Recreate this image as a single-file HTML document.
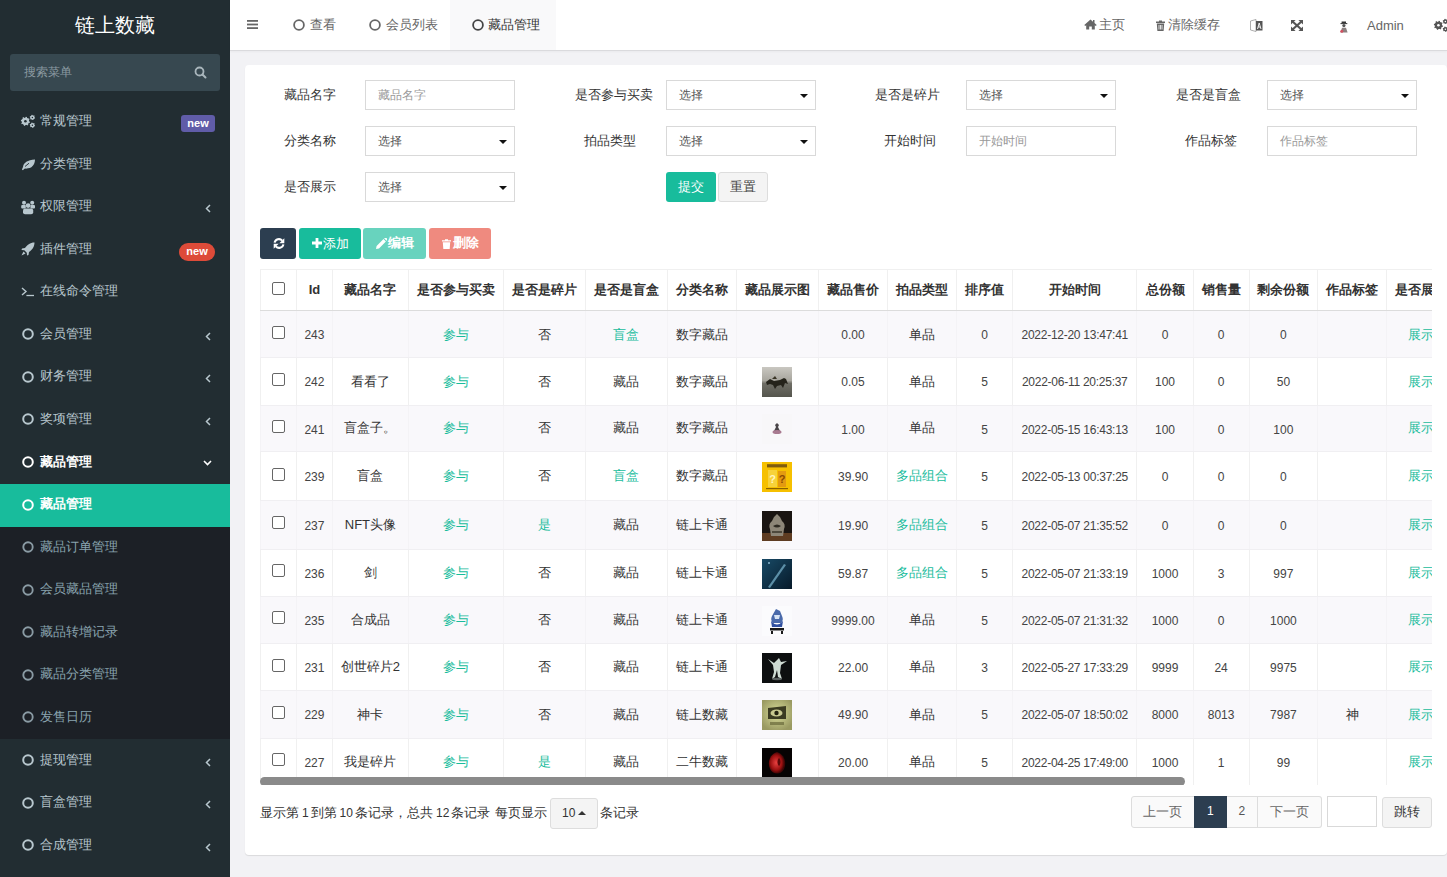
<!DOCTYPE html>
<html><head><meta charset="utf-8">
<style>
*{margin:0;padding:0;box-sizing:border-box}
html,body{width:1447px;height:877px;overflow:hidden;background:#f2f2f5;font-family:"Liberation Sans",sans-serif;font-size:13px;color:#333}
.abs{position:absolute}
#side{position:absolute;left:0;top:0;width:230px;height:877px;background:#222d32}
#logo{position:absolute;left:0;top:0;width:230px;height:50px;color:#fff;font-size:20px;text-align:center;line-height:50px}
#sform{position:absolute;left:10px;top:54px;width:210px;height:37px;background:#374850;border-radius:3px}
#sform span{position:absolute;left:14px;top:0;line-height:37px;font-size:12px;color:#8b9aa1}
.mi{position:absolute;left:0;width:230px;height:42.57px;color:#b8c7ce;font-size:13px}
.mi .t{position:absolute;left:40px;top:0;line-height:42.57px;white-space:nowrap}
.mi svg{position:absolute}
#subbg{position:absolute;left:0;top:483.6px;width:230px;height:255px;background:#1c2026}
#active{position:absolute;left:0;top:484px;width:230px;height:42.5px;background:#18bc9c}
.badge{position:absolute;color:#fff;font-weight:bold;font-size:11px;text-align:center}
#hdr{position:absolute;left:230px;top:0;width:1217px;height:51px;background:#fff;border-bottom:1px solid #dadadd;box-shadow:0 1px 2px rgba(0,0,0,.04)}
.nt{position:absolute;top:0;line-height:48px;font-size:13px;color:#666;white-space:nowrap}
#card{position:absolute;left:245px;top:65px;width:1202px;height:790px;background:#fff;border-radius:4px;box-shadow:0 1px 1px rgba(0,0,0,.1)}
.lbl{position:absolute;width:120px;text-align:center;font-size:13px;color:#333;line-height:30px;white-space:nowrap}
.inp{position:absolute;width:150px;height:30px;border:1px solid #d9d9d9;background:#fff;font-size:12px;color:#999;line-height:28px;padding-left:12px}
.sel{color:#555}
.caret{position:absolute;right:7px;top:13px;width:0;height:0;border-left:4px solid transparent;border-right:4px solid transparent;border-top:4px solid #111}
.btn{position:absolute;height:30.5px;border-radius:3px;color:#fff;font-size:13px;line-height:30px;text-align:center;white-space:nowrap}
#tbl{position:absolute;left:260px;top:269px;width:1172px;height:516px;overflow:hidden}
.hc{position:absolute;top:1px;height:41.5px;line-height:39px;text-align:center;font-weight:bold;color:#333;white-space:nowrap}
.tr{position:absolute;left:0;width:1200px}
.tr.odd{background:#f9f9fa}
.td{position:absolute;top:1px;text-align:center;color:#333;white-space:nowrap;font-size:13px}
.cj{position:relative;top:-1.5px}
.num{font-size:12px;color:#444}
.dt{letter-spacing:-0.26px}
.g{color:#18bc9c}
.cb{position:absolute;width:13px;height:13px;border:1px solid #666;border-radius:2px;background:#fff}
</style></head><body>
<div id="side">
<div id="logo">链上数藏</div>
<div id="sform"><span>搜索菜单</span><svg class="abs" style="left:184px;top:12px" width="13" height="13" viewBox="0 0 13 13"><circle cx="5.5" cy="5.5" r="4" fill="none" stroke="#a9b6bc" stroke-width="1.8"/><line x1="8.5" y1="8.5" x2="11.5" y2="11.5" stroke="#a9b6bc" stroke-width="2" stroke-linecap="round"/></svg></div>
<div id="subbg"></div><div id="active"></div>
<div class="mi" style="top:100.00px;"><svg style="left:20px;top:14px" width="16" height="15" viewBox="0 0 16 15"><path d="M9.00 7.30 L9.98 7.73 L9.72 8.89 L8.65 8.86 L7.95 9.85 L8.33 10.84 L7.33 11.48 L6.59 10.70 L5.40 10.90 L4.97 11.88 L3.81 11.62 L3.84 10.55 L2.85 9.85 L1.86 10.23 L1.22 9.23 L2.00 8.49 L1.80 7.30 L0.82 6.87 L1.08 5.71 L2.15 5.74 L2.85 4.75 L2.47 3.76 L3.47 3.12 L4.21 3.90 L5.40 3.70 L5.83 2.72 L6.99 2.98 L6.96 4.05 L7.95 4.75 L8.94 4.37 L9.58 5.37 L8.80 6.11Z" fill="#b8c7ce"/><circle cx="5.4" cy="7.3" r="3.6" fill="#b8c7ce"/><circle cx="5.4" cy="7.3" r="1.3" fill="#222d32"/><path d="M14.40 3.40 L15.08 3.74 L14.81 4.63 L14.05 4.52 L13.40 5.13 L13.45 5.89 L12.54 6.10 L12.25 5.39 L11.40 5.13 L10.77 5.55 L10.14 4.87 L10.60 4.27 L10.40 3.40 L9.72 3.06 L9.99 2.17 L10.75 2.28 L11.40 1.67 L11.35 0.91 L12.26 0.70 L12.55 1.41 L13.40 1.67 L14.03 1.25 L14.66 1.93 L14.20 2.53Z" fill="#b8c7ce"/><circle cx="12.4" cy="3.4" r="2.0" fill="#b8c7ce"/><circle cx="12.4" cy="3.4" r="0.75" fill="#222d32"/><path d="M14.40 11.20 L15.08 11.54 L14.81 12.43 L14.05 12.32 L13.40 12.93 L13.45 13.69 L12.54 13.90 L12.25 13.19 L11.40 12.93 L10.77 13.35 L10.14 12.67 L10.60 12.07 L10.40 11.20 L9.72 10.86 L9.99 9.97 L10.75 10.08 L11.40 9.47 L11.35 8.71 L12.26 8.50 L12.55 9.21 L13.40 9.47 L14.03 9.05 L14.66 9.73 L14.20 10.33Z" fill="#b8c7ce"/><circle cx="12.4" cy="11.2" r="2.0" fill="#b8c7ce"/><circle cx="12.4" cy="11.2" r="0.75" fill="#222d32"/></svg><span class="t">常规管理</span><div class="badge" style="left:181px;top:15px;width:34px;height:16.5px;line-height:16.5px;background:#605ca8;border-radius:3px">new</div></div>
<div class="mi" style="top:142.57px;"><svg style="left:20px;top:156px;top:14px" width="16" height="14" viewBox="0 0 16 14"><path d="M2 12.8 C2.2 11.5 2.6 10.6 3 10 C3.5 6 7.5 3 15 2.6 C14.8 8.5 11.5 12 5 11.6 C4.2 12 3.4 12.6 3 13.2Z" fill="#b8c7ce"/><path d="M5 9.5 L9 6.2" stroke="#222d32" stroke-width="0.9"/></svg><span class="t">分类管理</span></div>
<div class="mi" style="top:185.14px;"><svg style="left:20px;top:13.5px" width="16" height="16" viewBox="0 0 16 16"><g fill="#b8c7ce"><circle cx="4" cy="3.8" r="2"/><circle cx="12.2" cy="3.8" r="2"/><rect x="1.2" y="6" width="4.6" height="3.6" rx="1"/><rect x="10.4" y="6" width="4.6" height="3.6" rx="1"/><circle cx="8.1" cy="6.6" r="2.4"/><rect x="3" y="9.6" width="10.2" height="5.6" rx="2"/></g></svg><span class="t">权限管理</span><svg style="left:205px;top:19px" width="6" height="9" viewBox="0 0 6 9"><path d="M5 1 L1.5 4.5 L5 8" fill="none" stroke="#b8c7ce" stroke-width="1.5"/></svg></div>
<div class="mi" style="top:227.71px;"><svg style="left:21px;top:14px" width="14" height="14" viewBox="0 0 14 14"><path d="M13.5 0.5 C9 0.5 6 3 4 6 L1 6.5 L0.5 8 L3.3 8.2 L5.8 10.7 L6 13.5 L7.5 13 L8 10 C11 8 13.5 5 13.5 0.5Z" fill="#b8c7ce"/><path d="M2.5 9.5 L0.5 13.5 L4.5 11.5Z" fill="#b8c7ce"/></svg><span class="t">插件管理</span><div class="badge" style="left:179px;top:15.5px;width:36px;height:17.4px;line-height:17.4px;background:#dd4b39;border-radius:9px">new</div></div>
<div class="mi" style="top:270.28px;"><svg style="left:21px;top:16px" width="16" height="11" viewBox="0 0 16 11"><path d="M1 2 L5 5.5 L1 9" fill="none" stroke="#b8c7ce" stroke-width="1.4"/><line x1="5.4" y1="9.5" x2="13" y2="9.5" stroke="#b8c7ce" stroke-width="1.3"/></svg><span class="t">在线命令管理</span></div>
<div class="mi" style="top:312.85px;"><svg style="left:22px;top:15.5px" width="12" height="12" viewBox="0 0 12 12"><circle cx="6" cy="6" r="4.8" fill="none" stroke="#b8c7ce" stroke-width="2"/></svg><span class="t">会员管理</span><svg style="left:205px;top:19px" width="6" height="9" viewBox="0 0 6 9"><path d="M5 1 L1.5 4.5 L5 8" fill="none" stroke="#b8c7ce" stroke-width="1.5"/></svg></div>
<div class="mi" style="top:355.42px;"><svg style="left:22px;top:15.5px" width="12" height="12" viewBox="0 0 12 12"><circle cx="6" cy="6" r="4.8" fill="none" stroke="#b8c7ce" stroke-width="2"/></svg><span class="t">财务管理</span><svg style="left:205px;top:19px" width="6" height="9" viewBox="0 0 6 9"><path d="M5 1 L1.5 4.5 L5 8" fill="none" stroke="#b8c7ce" stroke-width="1.5"/></svg></div>
<div class="mi" style="top:397.99px;"><svg style="left:22px;top:15.5px" width="12" height="12" viewBox="0 0 12 12"><circle cx="6" cy="6" r="4.8" fill="none" stroke="#b8c7ce" stroke-width="2"/></svg><span class="t">奖项管理</span><svg style="left:205px;top:19px" width="6" height="9" viewBox="0 0 6 9"><path d="M5 1 L1.5 4.5 L5 8" fill="none" stroke="#b8c7ce" stroke-width="1.5"/></svg></div>
<div class="mi" style="top:440.56px;color:#fff;font-weight:bold"><svg style="left:22px;top:15.5px" width="12" height="12" viewBox="0 0 12 12"><circle cx="6" cy="6" r="4.8" fill="none" stroke="#fff" stroke-width="2"/></svg><span class="t">藏品管理</span><svg style="left:203px;top:19px" width="9" height="6" viewBox="0 0 9 6"><path d="M1 1 L4.5 4.5 L8 1" fill="none" stroke="#fff" stroke-width="1.6"/></svg></div>
<div class="mi" style="top:483.13px;color:#fff;font-weight:bold"><svg style="left:22px;top:15.5px" width="12" height="12" viewBox="0 0 12 12"><circle cx="6" cy="6" r="4.8" fill="none" stroke="#fff" stroke-width="2"/></svg><span class="t">藏品管理</span></div>
<div class="mi" style="top:525.70px;color:#8aa4af"><svg style="left:22px;top:15.5px" width="12" height="12" viewBox="0 0 12 12"><circle cx="6" cy="6" r="4.7" fill="none" stroke="#8a9ba4" stroke-width="1.9"/></svg><span class="t">藏品订单管理</span></div>
<div class="mi" style="top:568.27px;color:#8aa4af"><svg style="left:22px;top:15.5px" width="12" height="12" viewBox="0 0 12 12"><circle cx="6" cy="6" r="4.7" fill="none" stroke="#8a9ba4" stroke-width="1.9"/></svg><span class="t">会员藏品管理</span></div>
<div class="mi" style="top:610.84px;color:#8aa4af"><svg style="left:22px;top:15.5px" width="12" height="12" viewBox="0 0 12 12"><circle cx="6" cy="6" r="4.7" fill="none" stroke="#8a9ba4" stroke-width="1.9"/></svg><span class="t">藏品转增记录</span></div>
<div class="mi" style="top:653.41px;color:#8aa4af"><svg style="left:22px;top:15.5px" width="12" height="12" viewBox="0 0 12 12"><circle cx="6" cy="6" r="4.7" fill="none" stroke="#8a9ba4" stroke-width="1.9"/></svg><span class="t">藏品分类管理</span></div>
<div class="mi" style="top:695.98px;color:#8aa4af"><svg style="left:22px;top:15.5px" width="12" height="12" viewBox="0 0 12 12"><circle cx="6" cy="6" r="4.7" fill="none" stroke="#8a9ba4" stroke-width="1.9"/></svg><span class="t">发售日历</span></div>
<div class="mi" style="top:738.55px;"><svg style="left:22px;top:15.5px" width="12" height="12" viewBox="0 0 12 12"><circle cx="6" cy="6" r="4.8" fill="none" stroke="#b8c7ce" stroke-width="2"/></svg><span class="t">提现管理</span><svg style="left:205px;top:19px" width="6" height="9" viewBox="0 0 6 9"><path d="M5 1 L1.5 4.5 L5 8" fill="none" stroke="#b8c7ce" stroke-width="1.5"/></svg></div>
<div class="mi" style="top:781.12px;"><svg style="left:22px;top:15.5px" width="12" height="12" viewBox="0 0 12 12"><circle cx="6" cy="6" r="4.8" fill="none" stroke="#b8c7ce" stroke-width="2"/></svg><span class="t">盲盒管理</span><svg style="left:205px;top:19px" width="6" height="9" viewBox="0 0 6 9"><path d="M5 1 L1.5 4.5 L5 8" fill="none" stroke="#b8c7ce" stroke-width="1.5"/></svg></div>
<div class="mi" style="top:823.69px;"><svg style="left:22px;top:15.5px" width="12" height="12" viewBox="0 0 12 12"><circle cx="6" cy="6" r="4.8" fill="none" stroke="#b8c7ce" stroke-width="2"/></svg><span class="t">合成管理</span><svg style="left:205px;top:19px" width="6" height="9" viewBox="0 0 6 9"><path d="M5 1 L1.5 4.5 L5 8" fill="none" stroke="#b8c7ce" stroke-width="1.5"/></svg></div>
</div>
<div id="hdr">
<svg class="abs" style="left:17px;top:20px" width="11" height="9" viewBox="0 0 11 9"><g fill="#666"><rect x="0" y="0" width="11" height="1.8"/><rect x="0" y="3.6" width="11" height="1.8"/><rect x="0" y="7.2" width="11" height="1.8"/></g></svg>
<svg class="abs" style="left:62.5px;top:18.5px" width="12" height="12" viewBox="0 0 12 12"><circle cx="6" cy="6" r="4.9" fill="none" stroke="#666" stroke-width="1.8"/></svg>
<span class="nt" style="left:80px;top:0.5px">查看</span>
<svg class="abs" style="left:138.5px;top:18.5px" width="12" height="12" viewBox="0 0 12 12"><circle cx="6" cy="6" r="4.9" fill="none" stroke="#666" stroke-width="1.8"/></svg>
<span class="nt" style="left:156px;top:0.5px">会员列表</span>
<div class="abs" style="left:220px;top:0;width:106px;height:50px;background:#f9f9fa"></div>
<svg class="abs" style="left:241.5px;top:18.5px" width="12" height="12" viewBox="0 0 12 12"><circle cx="6" cy="6" r="4.9" fill="none" stroke="#444" stroke-width="1.8"/></svg>
<span class="nt" style="left:257.5px;top:0.5px;color:#333">藏品管理</span>
<svg class="abs" style="left:854px;top:19px" width="13" height="11" viewBox="0 0 13 11"><path d="M6.5 0.5 L0.3 6 L1.2 7 L2.2 6.2 V10.5 H5.2 V7.5 H7.8 V10.5 H10.8 V6.2 L11.8 7 L12.7 6 L10.5 4 V1 H9 V2.7Z" fill="#666"/></svg>
<span class="nt" style="left:869px;top:1px">主页</span>
<svg class="abs" style="left:926px;top:19.5px" width="9" height="11" viewBox="0 0 9 11"><path d="M0 1.5 H3 V0.5 H6 V1.5 H9 V3 H0Z M0.8 3.6 H8.2 L7.6 11 H1.4Z" fill="#666"/><g stroke="#fff" stroke-width="0.8"><line x1="3" y1="5" x2="3" y2="9.5"/><line x1="4.5" y1="5" x2="4.5" y2="9.5"/><line x1="6" y1="5" x2="6" y2="9.5"/></g></svg>
<span class="nt" style="left:938px;top:1px">清除缓存</span>
<svg class="abs" style="left:1020px;top:18.5px" width="13" height="13" viewBox="0 0 13 13"><path d="M0.5 2 L6 0.5 V12.5 L0.5 11Z" fill="#fff" stroke="#999" stroke-width="0.8"/><path d="M6 2 H12.5 V11.5 H6Z" fill="#555"/><path d="M7.5 10 L9.2 4 L11 10 M8.1 8 H10.3" fill="none" stroke="#fff" stroke-width="0.9"/></svg>
<svg class="abs" style="left:1061px;top:20px" width="12" height="11" viewBox="0 0 12 11"><g fill="#555"><path d="M0 0 H4.6 L0 4.6Z"/><path d="M12 0 V4.6 L7.4 0Z"/><path d="M0 11 V6.4 L4.6 11Z"/><path d="M12 11 H7.4 L12 6.4Z"/></g><g stroke="#555" stroke-width="2.1"><line x1="1.5" y1="1.5" x2="10.5" y2="9.5"/><line x1="10.5" y1="1.5" x2="1.5" y2="9.5"/></g></svg>
<svg class="abs" style="left:1109px;top:20.5px" width="10" height="12" viewBox="0 0 10 12"><rect x="2.6" y="0.5" width="4.4" height="1.6" fill="#333"/><rect x="1.5" y="2.1" width="6.8" height="1" fill="#333"/><circle cx="4.9" cy="4.6" r="1.6" fill="#555"/><path d="M1.5 11.5 L3 6.8 H7 L8.6 11.5Z" fill="#8a8080"/><circle cx="2.8" cy="10.2" r="1.5" fill="#d05060"/></svg>
<span class="nt" style="left:1137px;top:2px">Admin</span>
<svg class="abs" style="left:1203px;top:18px" width="16" height="15" viewBox="0 0 16 15"><path d="M9.00 7.30 L9.98 7.73 L9.72 8.89 L8.65 8.86 L7.95 9.85 L8.33 10.84 L7.33 11.48 L6.59 10.70 L5.40 10.90 L4.97 11.88 L3.81 11.62 L3.84 10.55 L2.85 9.85 L1.86 10.23 L1.22 9.23 L2.00 8.49 L1.80 7.30 L0.82 6.87 L1.08 5.71 L2.15 5.74 L2.85 4.75 L2.47 3.76 L3.47 3.12 L4.21 3.90 L5.40 3.70 L5.83 2.72 L6.99 2.98 L6.96 4.05 L7.95 4.75 L8.94 4.37 L9.58 5.37 L8.80 6.11Z" fill="#555"/><circle cx="5.4" cy="7.3" r="3.6" fill="#555"/><circle cx="5.4" cy="7.3" r="1.3" fill="#fff"/><path d="M14.40 3.40 L15.08 3.74 L14.81 4.63 L14.05 4.52 L13.40 5.13 L13.45 5.89 L12.54 6.10 L12.25 5.39 L11.40 5.13 L10.77 5.55 L10.14 4.87 L10.60 4.27 L10.40 3.40 L9.72 3.06 L9.99 2.17 L10.75 2.28 L11.40 1.67 L11.35 0.91 L12.26 0.70 L12.55 1.41 L13.40 1.67 L14.03 1.25 L14.66 1.93 L14.20 2.53Z" fill="#555"/><circle cx="12.4" cy="3.4" r="2.0" fill="#555"/><circle cx="12.4" cy="3.4" r="0.75" fill="#fff"/><path d="M14.40 11.20 L15.08 11.54 L14.81 12.43 L14.05 12.32 L13.40 12.93 L13.45 13.69 L12.54 13.90 L12.25 13.19 L11.40 12.93 L10.77 13.35 L10.14 12.67 L10.60 12.07 L10.40 11.20 L9.72 10.86 L9.99 9.97 L10.75 10.08 L11.40 9.47 L11.35 8.71 L12.26 8.50 L12.55 9.21 L13.40 9.47 L14.03 9.05 L14.66 9.73 L14.20 10.33Z" fill="#555"/><circle cx="12.4" cy="11.2" r="2.0" fill="#555"/><circle cx="12.4" cy="11.2" r="0.75" fill="#fff"/></svg>
</div>
<div id="card"></div>
<div class="lbl" style="left:249.5px;top:80px">藏品名字</div>
<div class="inp" style="left:365.0px;top:80px">藏品名字</div>
<div class="lbl" style="left:553.5px;top:80px">是否参与买卖</div>
<div class="inp sel" style="left:666.0px;top:80px">选择<i class="caret"></i></div>
<div class="lbl" style="left:847.9px;top:80px">是否是碎片</div>
<div class="inp sel" style="left:966.0px;top:80px">选择<i class="caret"></i></div>
<div class="lbl" style="left:1148.5px;top:80px">是否是盲盒</div>
<div class="inp sel" style="left:1267.0px;top:80px">选择<i class="caret"></i></div>
<div class="lbl" style="left:249.5px;top:126px">分类名称</div>
<div class="inp sel" style="left:365.0px;top:126px">选择<i class="caret"></i></div>
<div class="lbl" style="left:550.3px;top:126px">拍品类型</div>
<div class="inp sel" style="left:666.0px;top:126px">选择<i class="caret"></i></div>
<div class="lbl" style="left:850.0px;top:126px">开始时间</div>
<div class="inp" style="left:966.0px;top:126px">开始时间</div>
<div class="lbl" style="left:1150.6px;top:126px">作品标签</div>
<div class="inp" style="left:1267.0px;top:126px">作品标签</div>
<div class="lbl" style="left:249.5px;top:172px">是否展示</div>
<div class="inp sel" style="left:365.0px;top:172px">选择<i class="caret"></i></div>
<div class="btn" style="left:666px;top:172px;width:50px;height:30px;background:#18bc9c">提交</div>
<div class="btn" style="left:718px;top:172px;width:50px;height:30px;background:#f4f4f4;border:1px solid #ddd;color:#444;line-height:28px">重置</div>
<div class="btn" style="left:260px;top:228px;width:36px;background:#2c3e50"><svg class="abs" style="left:12.5px;top:10px" width="12" height="11" viewBox="0 0 12 11"><path d="M1.6 4.6 A4.4 4.4 0 0 1 9.2 2.6" fill="none" stroke="#fff" stroke-width="2.1"/><path d="M11.3 0.2 V5.2 H6.3Z" fill="#fff"/><path d="M10.4 6.4 A4.4 4.4 0 0 1 2.8 8.4" fill="none" stroke="#fff" stroke-width="2.1"/><path d="M0.7 10.8 V5.8 H5.7Z" fill="#fff"/></svg></div>
<div class="btn" style="left:299px;top:228px;width:61.5px;background:#18bc9c"><svg class="abs" style="left:13px;top:10px" width="10" height="10" viewBox="0 0 10 10"><path d="M3.6 0 H6.4 V3.6 H10 V6.4 H6.4 V10 H3.6 V6.4 H0 V3.6 H3.6Z" fill="#fff"/></svg><span class="abs" style="left:24px;top:0.5px">添加</span></div>
<div class="btn" style="left:363px;top:228px;width:63px;background:#18bc9c;opacity:.65"><svg class="abs" style="left:13px;top:10px" width="11" height="11" viewBox="0 0 11 11"><path d="M0 11 L0.6 8 L7.5 1.1 L9.9 3.5 L3 10.4Z M8.2 0.4 L9 -0.4 Q9.6 -0.8 10.2 -0.2 L11.2 0.8 Q11.8 1.4 11.2 2 L10.6 2.8Z" fill="#fff"/></svg><span class="abs" style="left:25px;top:0;font-weight:bold">编辑</span></div>
<div class="btn" style="left:429px;top:228px;width:62px;background:#e74c3c;opacity:.65"><svg class="abs" style="left:12.5px;top:10.5px" width="9" height="10" viewBox="0 0 9 10"><path d="M0 1.2 H3 V0.2 H6 V1.2 H9 V2.6 H0Z M0.8 3.2 H8.2 L7.7 10 H1.3Z" fill="#fff"/></svg><span class="abs" style="left:23.5px;top:0;font-weight:bold">删除</span></div>
<div id="tbl">
<div class="hc" style="left:0.0px;width:36.5px"><i class="cb" style="left:12px;top:12px"></i></div>
<div class="hc" style="left:36.5px;width:35.9px">Id</div>
<div class="hc" style="left:72.4px;width:76.0px">藏品名字</div>
<div class="hc" style="left:148.4px;width:95.1px">是否参与买卖</div>
<div class="hc" style="left:243.5px;width:81.9px">是否是碎片</div>
<div class="hc" style="left:325.4px;width:81.9px">是否是盲盒</div>
<div class="hc" style="left:407.3px;width:69.2px">分类名称</div>
<div class="hc" style="left:476.5px;width:82.0px">藏品展示图</div>
<div class="hc" style="left:558.5px;width:69.1px">藏品售价</div>
<div class="hc" style="left:627.6px;width:69.1px">拍品类型</div>
<div class="hc" style="left:696.7px;width:55.8px">排序值</div>
<div class="hc" style="left:752.5px;width:124.5px">开始时间</div>
<div class="hc" style="left:877.0px;width:56.0px">总份额</div>
<div class="hc" style="left:933.0px;width:56.2px">销售量</div>
<div class="hc" style="left:989.2px;width:68.4px">剩余份额</div>
<div class="hc" style="left:1057.6px;width:68.9px">作品标签</div>
<div class="hc" style="left:1126.5px;width:68.5px">是否展示</div>
<div class="abs" style="left:0;top:0;width:1200px;height:1px;background:#f0f0f0"></div>
<div class="abs" style="left:0px;top:0;width:1px;height:41px;background:#f0f0f0"></div>
<div class="abs" style="left:36px;top:0;width:1px;height:41px;background:#f0f0f0"></div>
<div class="abs" style="left:72px;top:0;width:1px;height:41px;background:#f0f0f0"></div>
<div class="abs" style="left:148px;top:0;width:1px;height:41px;background:#f0f0f0"></div>
<div class="abs" style="left:243px;top:0;width:1px;height:41px;background:#f0f0f0"></div>
<div class="abs" style="left:325px;top:0;width:1px;height:41px;background:#f0f0f0"></div>
<div class="abs" style="left:407px;top:0;width:1px;height:41px;background:#f0f0f0"></div>
<div class="abs" style="left:476px;top:0;width:1px;height:41px;background:#f0f0f0"></div>
<div class="abs" style="left:558px;top:0;width:1px;height:41px;background:#f0f0f0"></div>
<div class="abs" style="left:627px;top:0;width:1px;height:41px;background:#f0f0f0"></div>
<div class="abs" style="left:696px;top:0;width:1px;height:41px;background:#f0f0f0"></div>
<div class="abs" style="left:752px;top:0;width:1px;height:41px;background:#f0f0f0"></div>
<div class="abs" style="left:876px;top:0;width:1px;height:41px;background:#f0f0f0"></div>
<div class="abs" style="left:933px;top:0;width:1px;height:41px;background:#f0f0f0"></div>
<div class="abs" style="left:989px;top:0;width:1px;height:41px;background:#f0f0f0"></div>
<div class="abs" style="left:1057px;top:0;width:1px;height:41px;background:#f0f0f0"></div>
<div class="abs" style="left:1126px;top:0;width:1px;height:41px;background:#f0f0f0"></div>
<div class="abs" style="left:0;top:41px;width:1200px;height:1px;background:#dcdcdc"></div>
<div class="tr" style="top:42.0px;height:47.3px;background:#f9f8fb">
<div class="abs" style="left:0px;top:0;width:1px;height:47.3px;background:#f4f3f6"></div>
<div class="abs" style="left:36px;top:0;width:1px;height:47.3px;background:#f4f3f6"></div>
<div class="abs" style="left:72px;top:0;width:1px;height:47.3px;background:#f4f3f6"></div>
<div class="abs" style="left:148px;top:0;width:1px;height:47.3px;background:#f4f3f6"></div>
<div class="abs" style="left:243px;top:0;width:1px;height:47.3px;background:#f4f3f6"></div>
<div class="abs" style="left:325px;top:0;width:1px;height:47.3px;background:#f4f3f6"></div>
<div class="abs" style="left:407px;top:0;width:1px;height:47.3px;background:#f4f3f6"></div>
<div class="abs" style="left:476px;top:0;width:1px;height:47.3px;background:#f4f3f6"></div>
<div class="abs" style="left:558px;top:0;width:1px;height:47.3px;background:#f4f3f6"></div>
<div class="abs" style="left:627px;top:0;width:1px;height:47.3px;background:#f4f3f6"></div>
<div class="abs" style="left:696px;top:0;width:1px;height:47.3px;background:#f4f3f6"></div>
<div class="abs" style="left:752px;top:0;width:1px;height:47.3px;background:#f4f3f6"></div>
<div class="abs" style="left:876px;top:0;width:1px;height:47.3px;background:#f4f3f6"></div>
<div class="abs" style="left:933px;top:0;width:1px;height:47.3px;background:#f4f3f6"></div>
<div class="abs" style="left:989px;top:0;width:1px;height:47.3px;background:#f4f3f6"></div>
<div class="abs" style="left:1057px;top:0;width:1px;height:47.3px;background:#f4f3f6"></div>
<div class="abs" style="left:1126px;top:0;width:1px;height:47.3px;background:#f4f3f6"></div>
<div class="td" style="left:0.0px;width:36.5px;height:47.3px;line-height:47.3px"><i class="cb" style="left:12px;top:13.7px"></i></div>
<div class="td num" style="left:36.5px;width:35.9px;height:47.3px;line-height:47.3px">243</div>
<div class="td" style="left:72.4px;width:76.0px;height:47.3px;line-height:47.3px"></div>
<div class="td" style="left:148.4px;width:95.1px;height:47.3px;line-height:47.3px"><span class="g cj">参与</span></div>
<div class="td" style="left:243.5px;width:81.9px;height:47.3px;line-height:47.3px"><span class="cj">否</span></div>
<div class="td" style="left:325.4px;width:81.9px;height:47.3px;line-height:47.3px"><span class="g cj">盲盒</span></div>
<div class="td" style="left:407.3px;width:69.2px;height:47.3px;line-height:47.3px"><span class="cj">数字藏品</span></div>
<div class="td" style="left:476.5px;width:82.0px;height:47.3px;line-height:47.3px"></div>
<div class="td num" style="left:558.5px;width:69.1px;height:47.3px;line-height:47.3px">0.00</div>
<div class="td" style="left:627.6px;width:69.1px;height:47.3px;line-height:47.3px"><span class="cj">单品</span></div>
<div class="td num" style="left:696.7px;width:55.8px;height:47.3px;line-height:47.3px">0</div>
<div class="td num dt" style="left:752.5px;width:124.5px;height:47.3px;line-height:47.3px">2022-12-20 13:47:41</div>
<div class="td num" style="left:877.0px;width:56.0px;height:47.3px;line-height:47.3px">0</div>
<div class="td num" style="left:933.0px;width:56.2px;height:47.3px;line-height:47.3px">0</div>
<div class="td num" style="left:989.2px;width:68.4px;height:47.3px;line-height:47.3px">0</div>
<div class="td" style="left:1057.6px;width:68.9px;height:47.3px;line-height:47.3px"></div>
<div class="td" style="left:1126.5px;width:68.5px;height:47.3px;line-height:47.3px"><span class="g cj">展示</span></div>
</div>
<div class="abs" style="left:0;top:88.3px;width:1200px;height:1px;background:#f0eff2"></div>
<div class="tr" style="top:89.3px;height:47.4px;background:#fff">
<div class="abs" style="left:0px;top:0;width:1px;height:47.4px;background:#f0f0f0"></div>
<div class="abs" style="left:36px;top:0;width:1px;height:47.4px;background:#f0f0f0"></div>
<div class="abs" style="left:72px;top:0;width:1px;height:47.4px;background:#f0f0f0"></div>
<div class="abs" style="left:148px;top:0;width:1px;height:47.4px;background:#f0f0f0"></div>
<div class="abs" style="left:243px;top:0;width:1px;height:47.4px;background:#f0f0f0"></div>
<div class="abs" style="left:325px;top:0;width:1px;height:47.4px;background:#f0f0f0"></div>
<div class="abs" style="left:407px;top:0;width:1px;height:47.4px;background:#f0f0f0"></div>
<div class="abs" style="left:476px;top:0;width:1px;height:47.4px;background:#f0f0f0"></div>
<div class="abs" style="left:558px;top:0;width:1px;height:47.4px;background:#f0f0f0"></div>
<div class="abs" style="left:627px;top:0;width:1px;height:47.4px;background:#f0f0f0"></div>
<div class="abs" style="left:696px;top:0;width:1px;height:47.4px;background:#f0f0f0"></div>
<div class="abs" style="left:752px;top:0;width:1px;height:47.4px;background:#f0f0f0"></div>
<div class="abs" style="left:876px;top:0;width:1px;height:47.4px;background:#f0f0f0"></div>
<div class="abs" style="left:933px;top:0;width:1px;height:47.4px;background:#f0f0f0"></div>
<div class="abs" style="left:989px;top:0;width:1px;height:47.4px;background:#f0f0f0"></div>
<div class="abs" style="left:1057px;top:0;width:1px;height:47.4px;background:#f0f0f0"></div>
<div class="abs" style="left:1126px;top:0;width:1px;height:47.4px;background:#f0f0f0"></div>
<div class="td" style="left:0.0px;width:36.5px;height:47.4px;line-height:47.4px"><i class="cb" style="left:12px;top:13.7px"></i></div>
<div class="td num" style="left:36.5px;width:35.9px;height:47.4px;line-height:47.4px">242</div>
<div class="td" style="left:72.4px;width:76.0px;height:47.4px;line-height:47.4px"><span class="cj">看看了</span></div>
<div class="td" style="left:148.4px;width:95.1px;height:47.4px;line-height:47.4px"><span class="g cj">参与</span></div>
<div class="td" style="left:243.5px;width:81.9px;height:47.4px;line-height:47.4px"><span class="cj">否</span></div>
<div class="td" style="left:325.4px;width:81.9px;height:47.4px;line-height:47.4px"><span class="cj">藏品</span></div>
<div class="td" style="left:407.3px;width:69.2px;height:47.4px;line-height:47.4px"><span class="cj">数字藏品</span></div>
<div class="td" style="left:476.5px;width:82.0px;height:47.4px;line-height:47.4px"><span class="abs" style="left:25.0px;top:8.2px;width:30px;height:30px"><svg width="30" height="30" viewBox="0 0 30 30"><defs><linearGradient id="g1" x1="0" y1="0" x2="0" y2="1"><stop offset="0" stop-color="#c9c7c1"/><stop offset="0.45" stop-color="#a8a69e"/><stop offset="0.55" stop-color="#6f6e66"/><stop offset="1" stop-color="#55554d"/></linearGradient></defs><rect width="30" height="30" fill="url(#g1)"/><path d="M4 15 L8 12 L12 14 L18 13 L22 11 L24 12 L26 17 L23 16 L21 21 L19 18 L15 19 L13 22 L11 18 L8 17 L5 18Z" fill="#25231b"/><path d="M10 12 L13 9 L15 12Z" fill="#3a3526"/></svg></span></div>
<div class="td num" style="left:558.5px;width:69.1px;height:47.4px;line-height:47.4px">0.05</div>
<div class="td" style="left:627.6px;width:69.1px;height:47.4px;line-height:47.4px"><span class="cj">单品</span></div>
<div class="td num" style="left:696.7px;width:55.8px;height:47.4px;line-height:47.4px">5</div>
<div class="td num dt" style="left:752.5px;width:124.5px;height:47.4px;line-height:47.4px">2022-06-11 20:25:37</div>
<div class="td num" style="left:877.0px;width:56.0px;height:47.4px;line-height:47.4px">100</div>
<div class="td num" style="left:933.0px;width:56.2px;height:47.4px;line-height:47.4px">0</div>
<div class="td num" style="left:989.2px;width:68.4px;height:47.4px;line-height:47.4px">50</div>
<div class="td" style="left:1057.6px;width:68.9px;height:47.4px;line-height:47.4px"></div>
<div class="td" style="left:1126.5px;width:68.5px;height:47.4px;line-height:47.4px"><span class="g cj">展示</span></div>
</div>
<div class="abs" style="left:0;top:135.7px;width:1200px;height:1px;background:#f0eff2"></div>
<div class="tr" style="top:136.7px;height:46.5px;background:#f9f8fb">
<div class="abs" style="left:0px;top:0;width:1px;height:46.5px;background:#f4f3f6"></div>
<div class="abs" style="left:36px;top:0;width:1px;height:46.5px;background:#f4f3f6"></div>
<div class="abs" style="left:72px;top:0;width:1px;height:46.5px;background:#f4f3f6"></div>
<div class="abs" style="left:148px;top:0;width:1px;height:46.5px;background:#f4f3f6"></div>
<div class="abs" style="left:243px;top:0;width:1px;height:46.5px;background:#f4f3f6"></div>
<div class="abs" style="left:325px;top:0;width:1px;height:46.5px;background:#f4f3f6"></div>
<div class="abs" style="left:407px;top:0;width:1px;height:46.5px;background:#f4f3f6"></div>
<div class="abs" style="left:476px;top:0;width:1px;height:46.5px;background:#f4f3f6"></div>
<div class="abs" style="left:558px;top:0;width:1px;height:46.5px;background:#f4f3f6"></div>
<div class="abs" style="left:627px;top:0;width:1px;height:46.5px;background:#f4f3f6"></div>
<div class="abs" style="left:696px;top:0;width:1px;height:46.5px;background:#f4f3f6"></div>
<div class="abs" style="left:752px;top:0;width:1px;height:46.5px;background:#f4f3f6"></div>
<div class="abs" style="left:876px;top:0;width:1px;height:46.5px;background:#f4f3f6"></div>
<div class="abs" style="left:933px;top:0;width:1px;height:46.5px;background:#f4f3f6"></div>
<div class="abs" style="left:989px;top:0;width:1px;height:46.5px;background:#f4f3f6"></div>
<div class="abs" style="left:1057px;top:0;width:1px;height:46.5px;background:#f4f3f6"></div>
<div class="abs" style="left:1126px;top:0;width:1px;height:46.5px;background:#f4f3f6"></div>
<div class="td" style="left:0.0px;width:36.5px;height:46.5px;line-height:46.5px"><i class="cb" style="left:12px;top:13.2px"></i></div>
<div class="td num" style="left:36.5px;width:35.9px;height:46.5px;line-height:46.5px">241</div>
<div class="td" style="left:72.4px;width:76.0px;height:46.5px;line-height:46.5px"><span class="cj">盲盒子。</span></div>
<div class="td" style="left:148.4px;width:95.1px;height:46.5px;line-height:46.5px"><span class="g cj">参与</span></div>
<div class="td" style="left:243.5px;width:81.9px;height:46.5px;line-height:46.5px"><span class="cj">否</span></div>
<div class="td" style="left:325.4px;width:81.9px;height:46.5px;line-height:46.5px"><span class="cj">藏品</span></div>
<div class="td" style="left:407.3px;width:69.2px;height:46.5px;line-height:46.5px"><span class="cj">数字藏品</span></div>
<div class="td" style="left:476.5px;width:82.0px;height:46.5px;line-height:46.5px"><span class="abs" style="left:25.0px;top:7.8px;width:30px;height:30px"><svg width="30" height="30" viewBox="0 0 30 30"><rect width="30" height="30" fill="#f8f7f9"/><path d="M13 11 L15 9 L17 11 L16 13 L18 17 L12 17 L14 13Z" fill="#4a4548"/><ellipse cx="15" cy="18" rx="4.5" ry="2" fill="#a87a90"/></svg></span></div>
<div class="td num" style="left:558.5px;width:69.1px;height:46.5px;line-height:46.5px">1.00</div>
<div class="td" style="left:627.6px;width:69.1px;height:46.5px;line-height:46.5px"><span class="cj">单品</span></div>
<div class="td num" style="left:696.7px;width:55.8px;height:46.5px;line-height:46.5px">5</div>
<div class="td num dt" style="left:752.5px;width:124.5px;height:46.5px;line-height:46.5px">2022-05-15 16:43:13</div>
<div class="td num" style="left:877.0px;width:56.0px;height:46.5px;line-height:46.5px">100</div>
<div class="td num" style="left:933.0px;width:56.2px;height:46.5px;line-height:46.5px">0</div>
<div class="td num" style="left:989.2px;width:68.4px;height:46.5px;line-height:46.5px">100</div>
<div class="td" style="left:1057.6px;width:68.9px;height:46.5px;line-height:46.5px"></div>
<div class="td" style="left:1126.5px;width:68.5px;height:46.5px;line-height:46.5px"><span class="g cj">展示</span></div>
</div>
<div class="abs" style="left:0;top:182.2px;width:1200px;height:1px;background:#f0eff2"></div>
<div class="tr" style="top:183.2px;height:48.9px;background:#fff">
<div class="abs" style="left:0px;top:0;width:1px;height:48.9px;background:#f0f0f0"></div>
<div class="abs" style="left:36px;top:0;width:1px;height:48.9px;background:#f0f0f0"></div>
<div class="abs" style="left:72px;top:0;width:1px;height:48.9px;background:#f0f0f0"></div>
<div class="abs" style="left:148px;top:0;width:1px;height:48.9px;background:#f0f0f0"></div>
<div class="abs" style="left:243px;top:0;width:1px;height:48.9px;background:#f0f0f0"></div>
<div class="abs" style="left:325px;top:0;width:1px;height:48.9px;background:#f0f0f0"></div>
<div class="abs" style="left:407px;top:0;width:1px;height:48.9px;background:#f0f0f0"></div>
<div class="abs" style="left:476px;top:0;width:1px;height:48.9px;background:#f0f0f0"></div>
<div class="abs" style="left:558px;top:0;width:1px;height:48.9px;background:#f0f0f0"></div>
<div class="abs" style="left:627px;top:0;width:1px;height:48.9px;background:#f0f0f0"></div>
<div class="abs" style="left:696px;top:0;width:1px;height:48.9px;background:#f0f0f0"></div>
<div class="abs" style="left:752px;top:0;width:1px;height:48.9px;background:#f0f0f0"></div>
<div class="abs" style="left:876px;top:0;width:1px;height:48.9px;background:#f0f0f0"></div>
<div class="abs" style="left:933px;top:0;width:1px;height:48.9px;background:#f0f0f0"></div>
<div class="abs" style="left:989px;top:0;width:1px;height:48.9px;background:#f0f0f0"></div>
<div class="abs" style="left:1057px;top:0;width:1px;height:48.9px;background:#f0f0f0"></div>
<div class="abs" style="left:1126px;top:0;width:1px;height:48.9px;background:#f0f0f0"></div>
<div class="td" style="left:0.0px;width:36.5px;height:48.9px;line-height:48.9px"><i class="cb" style="left:12px;top:14.5px"></i></div>
<div class="td num" style="left:36.5px;width:35.9px;height:48.9px;line-height:48.9px">239</div>
<div class="td" style="left:72.4px;width:76.0px;height:48.9px;line-height:48.9px"><span class="cj">盲盒</span></div>
<div class="td" style="left:148.4px;width:95.1px;height:48.9px;line-height:48.9px"><span class="g cj">参与</span></div>
<div class="td" style="left:243.5px;width:81.9px;height:48.9px;line-height:48.9px"><span class="cj">否</span></div>
<div class="td" style="left:325.4px;width:81.9px;height:48.9px;line-height:48.9px"><span class="g cj">盲盒</span></div>
<div class="td" style="left:407.3px;width:69.2px;height:48.9px;line-height:48.9px"><span class="cj">数字藏品</span></div>
<div class="td" style="left:476.5px;width:82.0px;height:48.9px;line-height:48.9px"><span class="abs" style="left:25.0px;top:9.0px;width:30px;height:30px"><svg width="30" height="30" viewBox="0 0 30 30"><rect width="30" height="30" fill="#f6c000"/><rect x="5" y="2.2" width="20" height="3.2" fill="#6a4a10" opacity="0.85"/><rect x="6" y="8" width="9" height="17" fill="#f7d23a"/><rect x="16" y="9" width="8" height="16" fill="#e39a10"/><text x="10.5" y="21" font-size="11" text-anchor="middle" fill="#fff5c0" font-family="Liberation Sans" font-weight="bold">?</text><text x="20" y="21" font-size="11" text-anchor="middle" fill="#8a4a00" font-family="Liberation Sans" font-weight="bold">?</text><rect x="4" y="26" width="22" height="1.2" fill="#8a6000"/></svg></span></div>
<div class="td num" style="left:558.5px;width:69.1px;height:48.9px;line-height:48.9px">39.90</div>
<div class="td" style="left:627.6px;width:69.1px;height:48.9px;line-height:48.9px"><span class="g cj">多品组合</span></div>
<div class="td num" style="left:696.7px;width:55.8px;height:48.9px;line-height:48.9px">5</div>
<div class="td num dt" style="left:752.5px;width:124.5px;height:48.9px;line-height:48.9px">2022-05-13 00:37:25</div>
<div class="td num" style="left:877.0px;width:56.0px;height:48.9px;line-height:48.9px">0</div>
<div class="td num" style="left:933.0px;width:56.2px;height:48.9px;line-height:48.9px">0</div>
<div class="td num" style="left:989.2px;width:68.4px;height:48.9px;line-height:48.9px">0</div>
<div class="td" style="left:1057.6px;width:68.9px;height:48.9px;line-height:48.9px"></div>
<div class="td" style="left:1126.5px;width:68.5px;height:48.9px;line-height:48.9px"><span class="g cj">展示</span></div>
</div>
<div class="abs" style="left:0;top:231.1px;width:1200px;height:1px;background:#f0eff2"></div>
<div class="tr" style="top:232.1px;height:48.9px;background:#f9f8fb">
<div class="abs" style="left:0px;top:0;width:1px;height:48.9px;background:#f4f3f6"></div>
<div class="abs" style="left:36px;top:0;width:1px;height:48.9px;background:#f4f3f6"></div>
<div class="abs" style="left:72px;top:0;width:1px;height:48.9px;background:#f4f3f6"></div>
<div class="abs" style="left:148px;top:0;width:1px;height:48.9px;background:#f4f3f6"></div>
<div class="abs" style="left:243px;top:0;width:1px;height:48.9px;background:#f4f3f6"></div>
<div class="abs" style="left:325px;top:0;width:1px;height:48.9px;background:#f4f3f6"></div>
<div class="abs" style="left:407px;top:0;width:1px;height:48.9px;background:#f4f3f6"></div>
<div class="abs" style="left:476px;top:0;width:1px;height:48.9px;background:#f4f3f6"></div>
<div class="abs" style="left:558px;top:0;width:1px;height:48.9px;background:#f4f3f6"></div>
<div class="abs" style="left:627px;top:0;width:1px;height:48.9px;background:#f4f3f6"></div>
<div class="abs" style="left:696px;top:0;width:1px;height:48.9px;background:#f4f3f6"></div>
<div class="abs" style="left:752px;top:0;width:1px;height:48.9px;background:#f4f3f6"></div>
<div class="abs" style="left:876px;top:0;width:1px;height:48.9px;background:#f4f3f6"></div>
<div class="abs" style="left:933px;top:0;width:1px;height:48.9px;background:#f4f3f6"></div>
<div class="abs" style="left:989px;top:0;width:1px;height:48.9px;background:#f4f3f6"></div>
<div class="abs" style="left:1057px;top:0;width:1px;height:48.9px;background:#f4f3f6"></div>
<div class="abs" style="left:1126px;top:0;width:1px;height:48.9px;background:#f4f3f6"></div>
<div class="td" style="left:0.0px;width:36.5px;height:48.9px;line-height:48.9px"><i class="cb" style="left:12px;top:14.4px"></i></div>
<div class="td num" style="left:36.5px;width:35.9px;height:48.9px;line-height:48.9px">237</div>
<div class="td" style="left:72.4px;width:76.0px;height:48.9px;line-height:48.9px"><span class="cj">NFT头像</span></div>
<div class="td" style="left:148.4px;width:95.1px;height:48.9px;line-height:48.9px"><span class="g cj">参与</span></div>
<div class="td" style="left:243.5px;width:81.9px;height:48.9px;line-height:48.9px"><span class="g cj">是</span></div>
<div class="td" style="left:325.4px;width:81.9px;height:48.9px;line-height:48.9px"><span class="cj">藏品</span></div>
<div class="td" style="left:407.3px;width:69.2px;height:48.9px;line-height:48.9px"><span class="cj">链上卡通</span></div>
<div class="td" style="left:476.5px;width:82.0px;height:48.9px;line-height:48.9px"><span class="abs" style="left:25.0px;top:8.9px;width:30px;height:30px"><svg width="30" height="30" viewBox="0 0 30 30"><rect width="30" height="30" fill="#1a1512"/><rect y="22" width="30" height="8" fill="#5e3c22"/><path d="M9 25 L8 18 Q6 13 10 10 L12 6 L15 3 L18 6 L20 10 Q24 13 22 18 L21 25Z" fill="#8d8678"/><path d="M11 15 Q15 12 19 15 Q15 18 11 15Z" fill="#2e2a22"/><path d="M10 21 H20" stroke="#3a342a" stroke-width="1.5"/></svg></span></div>
<div class="td num" style="left:558.5px;width:69.1px;height:48.9px;line-height:48.9px">19.90</div>
<div class="td" style="left:627.6px;width:69.1px;height:48.9px;line-height:48.9px"><span class="g cj">多品组合</span></div>
<div class="td num" style="left:696.7px;width:55.8px;height:48.9px;line-height:48.9px">5</div>
<div class="td num dt" style="left:752.5px;width:124.5px;height:48.9px;line-height:48.9px">2022-05-07 21:35:52</div>
<div class="td num" style="left:877.0px;width:56.0px;height:48.9px;line-height:48.9px">0</div>
<div class="td num" style="left:933.0px;width:56.2px;height:48.9px;line-height:48.9px">0</div>
<div class="td num" style="left:989.2px;width:68.4px;height:48.9px;line-height:48.9px">0</div>
<div class="td" style="left:1057.6px;width:68.9px;height:48.9px;line-height:48.9px"></div>
<div class="td" style="left:1126.5px;width:68.5px;height:48.9px;line-height:48.9px"><span class="g cj">展示</span></div>
</div>
<div class="abs" style="left:0;top:280.0px;width:1200px;height:1px;background:#f0eff2"></div>
<div class="tr" style="top:281.0px;height:46.8px;background:#fff">
<div class="abs" style="left:0px;top:0;width:1px;height:46.8px;background:#f0f0f0"></div>
<div class="abs" style="left:36px;top:0;width:1px;height:46.8px;background:#f0f0f0"></div>
<div class="abs" style="left:72px;top:0;width:1px;height:46.8px;background:#f0f0f0"></div>
<div class="abs" style="left:148px;top:0;width:1px;height:46.8px;background:#f0f0f0"></div>
<div class="abs" style="left:243px;top:0;width:1px;height:46.8px;background:#f0f0f0"></div>
<div class="abs" style="left:325px;top:0;width:1px;height:46.8px;background:#f0f0f0"></div>
<div class="abs" style="left:407px;top:0;width:1px;height:46.8px;background:#f0f0f0"></div>
<div class="abs" style="left:476px;top:0;width:1px;height:46.8px;background:#f0f0f0"></div>
<div class="abs" style="left:558px;top:0;width:1px;height:46.8px;background:#f0f0f0"></div>
<div class="abs" style="left:627px;top:0;width:1px;height:46.8px;background:#f0f0f0"></div>
<div class="abs" style="left:696px;top:0;width:1px;height:46.8px;background:#f0f0f0"></div>
<div class="abs" style="left:752px;top:0;width:1px;height:46.8px;background:#f0f0f0"></div>
<div class="abs" style="left:876px;top:0;width:1px;height:46.8px;background:#f0f0f0"></div>
<div class="abs" style="left:933px;top:0;width:1px;height:46.8px;background:#f0f0f0"></div>
<div class="abs" style="left:989px;top:0;width:1px;height:46.8px;background:#f0f0f0"></div>
<div class="abs" style="left:1057px;top:0;width:1px;height:46.8px;background:#f0f0f0"></div>
<div class="abs" style="left:1126px;top:0;width:1px;height:46.8px;background:#f0f0f0"></div>
<div class="td" style="left:0.0px;width:36.5px;height:46.8px;line-height:46.8px"><i class="cb" style="left:12px;top:13.4px"></i></div>
<div class="td num" style="left:36.5px;width:35.9px;height:46.8px;line-height:46.8px">236</div>
<div class="td" style="left:72.4px;width:76.0px;height:46.8px;line-height:46.8px"><span class="cj">剑</span></div>
<div class="td" style="left:148.4px;width:95.1px;height:46.8px;line-height:46.8px"><span class="g cj">参与</span></div>
<div class="td" style="left:243.5px;width:81.9px;height:46.8px;line-height:46.8px"><span class="cj">否</span></div>
<div class="td" style="left:325.4px;width:81.9px;height:46.8px;line-height:46.8px"><span class="cj">藏品</span></div>
<div class="td" style="left:407.3px;width:69.2px;height:46.8px;line-height:46.8px"><span class="cj">链上卡通</span></div>
<div class="td" style="left:476.5px;width:82.0px;height:46.8px;line-height:46.8px"><span class="abs" style="left:25.0px;top:7.9px;width:30px;height:30px"><svg width="30" height="30" viewBox="0 0 30 30"><defs><linearGradient id="g5" x1="0" y1="0" x2="1" y2="1"><stop offset="0" stop-color="#184a66"/><stop offset="1" stop-color="#071a2a"/></linearGradient></defs><rect width="30" height="30" fill="url(#g5)"/><path d="M6 28 L22 5 L24 6 L8 29Z" fill="#6aa0b8" opacity="0.85"/><circle cx="7" cy="4" r="1" fill="#8ab8d0"/></svg></span></div>
<div class="td num" style="left:558.5px;width:69.1px;height:46.8px;line-height:46.8px">59.87</div>
<div class="td" style="left:627.6px;width:69.1px;height:46.8px;line-height:46.8px"><span class="g cj">多品组合</span></div>
<div class="td num" style="left:696.7px;width:55.8px;height:46.8px;line-height:46.8px">5</div>
<div class="td num dt" style="left:752.5px;width:124.5px;height:46.8px;line-height:46.8px">2022-05-07 21:33:19</div>
<div class="td num" style="left:877.0px;width:56.0px;height:46.8px;line-height:46.8px">1000</div>
<div class="td num" style="left:933.0px;width:56.2px;height:46.8px;line-height:46.8px">3</div>
<div class="td num" style="left:989.2px;width:68.4px;height:46.8px;line-height:46.8px">997</div>
<div class="td" style="left:1057.6px;width:68.9px;height:46.8px;line-height:46.8px"></div>
<div class="td" style="left:1126.5px;width:68.5px;height:46.8px;line-height:46.8px"><span class="g cj">展示</span></div>
</div>
<div class="abs" style="left:0;top:326.8px;width:1200px;height:1px;background:#f0eff2"></div>
<div class="tr" style="top:327.8px;height:47.4px;background:#f9f8fb">
<div class="abs" style="left:0px;top:0;width:1px;height:47.4px;background:#f4f3f6"></div>
<div class="abs" style="left:36px;top:0;width:1px;height:47.4px;background:#f4f3f6"></div>
<div class="abs" style="left:72px;top:0;width:1px;height:47.4px;background:#f4f3f6"></div>
<div class="abs" style="left:148px;top:0;width:1px;height:47.4px;background:#f4f3f6"></div>
<div class="abs" style="left:243px;top:0;width:1px;height:47.4px;background:#f4f3f6"></div>
<div class="abs" style="left:325px;top:0;width:1px;height:47.4px;background:#f4f3f6"></div>
<div class="abs" style="left:407px;top:0;width:1px;height:47.4px;background:#f4f3f6"></div>
<div class="abs" style="left:476px;top:0;width:1px;height:47.4px;background:#f4f3f6"></div>
<div class="abs" style="left:558px;top:0;width:1px;height:47.4px;background:#f4f3f6"></div>
<div class="abs" style="left:627px;top:0;width:1px;height:47.4px;background:#f4f3f6"></div>
<div class="abs" style="left:696px;top:0;width:1px;height:47.4px;background:#f4f3f6"></div>
<div class="abs" style="left:752px;top:0;width:1px;height:47.4px;background:#f4f3f6"></div>
<div class="abs" style="left:876px;top:0;width:1px;height:47.4px;background:#f4f3f6"></div>
<div class="abs" style="left:933px;top:0;width:1px;height:47.4px;background:#f4f3f6"></div>
<div class="abs" style="left:989px;top:0;width:1px;height:47.4px;background:#f4f3f6"></div>
<div class="abs" style="left:1057px;top:0;width:1px;height:47.4px;background:#f4f3f6"></div>
<div class="abs" style="left:1126px;top:0;width:1px;height:47.4px;background:#f4f3f6"></div>
<div class="td" style="left:0.0px;width:36.5px;height:47.4px;line-height:47.4px"><i class="cb" style="left:12px;top:13.7px"></i></div>
<div class="td num" style="left:36.5px;width:35.9px;height:47.4px;line-height:47.4px">235</div>
<div class="td" style="left:72.4px;width:76.0px;height:47.4px;line-height:47.4px"><span class="cj">合成品</span></div>
<div class="td" style="left:148.4px;width:95.1px;height:47.4px;line-height:47.4px"><span class="g cj">参与</span></div>
<div class="td" style="left:243.5px;width:81.9px;height:47.4px;line-height:47.4px"><span class="cj">否</span></div>
<div class="td" style="left:325.4px;width:81.9px;height:47.4px;line-height:47.4px"><span class="cj">藏品</span></div>
<div class="td" style="left:407.3px;width:69.2px;height:47.4px;line-height:47.4px"><span class="cj">链上卡通</span></div>
<div class="td" style="left:476.5px;width:82.0px;height:47.4px;line-height:47.4px"><span class="abs" style="left:25.0px;top:8.2px;width:30px;height:30px"><svg width="30" height="30" viewBox="0 0 30 30"><rect width="30" height="30" fill="#fbfbfd"/><path d="M10 10 L14 3 L18 5 L20 10 Q22 14 19 17 L11 17 Q8 14 10 10Z" fill="#4a6aaa"/><path d="M12 9 L18 9 L17 13 L13 13Z" fill="#d8e4f4"/><path d="M9 15 Q15 22 21 15 L20 21 L10 21Z" fill="#3050a0"/><rect x="8" y="22" width="14" height="2.5" fill="#1a1a1a"/><rect x="9" y="25" width="2" height="3" fill="#1a1a1a"/><rect x="19" y="25" width="2" height="3" fill="#1a1a1a"/></svg></span></div>
<div class="td num" style="left:558.5px;width:69.1px;height:47.4px;line-height:47.4px">9999.00</div>
<div class="td" style="left:627.6px;width:69.1px;height:47.4px;line-height:47.4px"><span class="cj">单品</span></div>
<div class="td num" style="left:696.7px;width:55.8px;height:47.4px;line-height:47.4px">5</div>
<div class="td num dt" style="left:752.5px;width:124.5px;height:47.4px;line-height:47.4px">2022-05-07 21:31:32</div>
<div class="td num" style="left:877.0px;width:56.0px;height:47.4px;line-height:47.4px">1000</div>
<div class="td num" style="left:933.0px;width:56.2px;height:47.4px;line-height:47.4px">0</div>
<div class="td num" style="left:989.2px;width:68.4px;height:47.4px;line-height:47.4px">1000</div>
<div class="td" style="left:1057.6px;width:68.9px;height:47.4px;line-height:47.4px"></div>
<div class="td" style="left:1126.5px;width:68.5px;height:47.4px;line-height:47.4px"><span class="g cj">展示</span></div>
</div>
<div class="abs" style="left:0;top:374.2px;width:1200px;height:1px;background:#f0eff2"></div>
<div class="tr" style="top:375.2px;height:46.8px;background:#fff">
<div class="abs" style="left:0px;top:0;width:1px;height:46.8px;background:#f0f0f0"></div>
<div class="abs" style="left:36px;top:0;width:1px;height:46.8px;background:#f0f0f0"></div>
<div class="abs" style="left:72px;top:0;width:1px;height:46.8px;background:#f0f0f0"></div>
<div class="abs" style="left:148px;top:0;width:1px;height:46.8px;background:#f0f0f0"></div>
<div class="abs" style="left:243px;top:0;width:1px;height:46.8px;background:#f0f0f0"></div>
<div class="abs" style="left:325px;top:0;width:1px;height:46.8px;background:#f0f0f0"></div>
<div class="abs" style="left:407px;top:0;width:1px;height:46.8px;background:#f0f0f0"></div>
<div class="abs" style="left:476px;top:0;width:1px;height:46.8px;background:#f0f0f0"></div>
<div class="abs" style="left:558px;top:0;width:1px;height:46.8px;background:#f0f0f0"></div>
<div class="abs" style="left:627px;top:0;width:1px;height:46.8px;background:#f0f0f0"></div>
<div class="abs" style="left:696px;top:0;width:1px;height:46.8px;background:#f0f0f0"></div>
<div class="abs" style="left:752px;top:0;width:1px;height:46.8px;background:#f0f0f0"></div>
<div class="abs" style="left:876px;top:0;width:1px;height:46.8px;background:#f0f0f0"></div>
<div class="abs" style="left:933px;top:0;width:1px;height:46.8px;background:#f0f0f0"></div>
<div class="abs" style="left:989px;top:0;width:1px;height:46.8px;background:#f0f0f0"></div>
<div class="abs" style="left:1057px;top:0;width:1px;height:46.8px;background:#f0f0f0"></div>
<div class="abs" style="left:1126px;top:0;width:1px;height:46.8px;background:#f0f0f0"></div>
<div class="td" style="left:0.0px;width:36.5px;height:46.8px;line-height:46.8px"><i class="cb" style="left:12px;top:13.4px"></i></div>
<div class="td num" style="left:36.5px;width:35.9px;height:46.8px;line-height:46.8px">231</div>
<div class="td" style="left:72.4px;width:76.0px;height:46.8px;line-height:46.8px"><span class="cj">创世碎片2</span></div>
<div class="td" style="left:148.4px;width:95.1px;height:46.8px;line-height:46.8px"><span class="g cj">参与</span></div>
<div class="td" style="left:243.5px;width:81.9px;height:46.8px;line-height:46.8px"><span class="cj">否</span></div>
<div class="td" style="left:325.4px;width:81.9px;height:46.8px;line-height:46.8px"><span class="cj">藏品</span></div>
<div class="td" style="left:407.3px;width:69.2px;height:46.8px;line-height:46.8px"><span class="cj">链上卡通</span></div>
<div class="td" style="left:476.5px;width:82.0px;height:46.8px;line-height:46.8px"><span class="abs" style="left:25.0px;top:7.9px;width:30px;height:30px"><svg width="30" height="30" viewBox="0 0 30 30"><rect width="30" height="30" fill="#0d0f10"/><path d="M6 6 L12 10 L14 8 L17 5 L19 9 L25 8 L19 12 L18 20 L20 26 L16 24 L15 17 L13 24 L10 26 L12 19 L11 12Z" fill="#cfdcd4"/><ellipse cx="15" cy="26" rx="5" ry="1.2" fill="#5a6060"/></svg></span></div>
<div class="td num" style="left:558.5px;width:69.1px;height:46.8px;line-height:46.8px">22.00</div>
<div class="td" style="left:627.6px;width:69.1px;height:46.8px;line-height:46.8px"><span class="cj">单品</span></div>
<div class="td num" style="left:696.7px;width:55.8px;height:46.8px;line-height:46.8px">3</div>
<div class="td num dt" style="left:752.5px;width:124.5px;height:46.8px;line-height:46.8px">2022-05-27 17:33:29</div>
<div class="td num" style="left:877.0px;width:56.0px;height:46.8px;line-height:46.8px">9999</div>
<div class="td num" style="left:933.0px;width:56.2px;height:46.8px;line-height:46.8px">24</div>
<div class="td num" style="left:989.2px;width:68.4px;height:46.8px;line-height:46.8px">9975</div>
<div class="td" style="left:1057.6px;width:68.9px;height:46.8px;line-height:46.8px"></div>
<div class="td" style="left:1126.5px;width:68.5px;height:46.8px;line-height:46.8px"><span class="g cj">展示</span></div>
</div>
<div class="abs" style="left:0;top:421.0px;width:1200px;height:1px;background:#f0eff2"></div>
<div class="tr" style="top:422.0px;height:47.5px;background:#f9f8fb">
<div class="abs" style="left:0px;top:0;width:1px;height:47.5px;background:#f4f3f6"></div>
<div class="abs" style="left:36px;top:0;width:1px;height:47.5px;background:#f4f3f6"></div>
<div class="abs" style="left:72px;top:0;width:1px;height:47.5px;background:#f4f3f6"></div>
<div class="abs" style="left:148px;top:0;width:1px;height:47.5px;background:#f4f3f6"></div>
<div class="abs" style="left:243px;top:0;width:1px;height:47.5px;background:#f4f3f6"></div>
<div class="abs" style="left:325px;top:0;width:1px;height:47.5px;background:#f4f3f6"></div>
<div class="abs" style="left:407px;top:0;width:1px;height:47.5px;background:#f4f3f6"></div>
<div class="abs" style="left:476px;top:0;width:1px;height:47.5px;background:#f4f3f6"></div>
<div class="abs" style="left:558px;top:0;width:1px;height:47.5px;background:#f4f3f6"></div>
<div class="abs" style="left:627px;top:0;width:1px;height:47.5px;background:#f4f3f6"></div>
<div class="abs" style="left:696px;top:0;width:1px;height:47.5px;background:#f4f3f6"></div>
<div class="abs" style="left:752px;top:0;width:1px;height:47.5px;background:#f4f3f6"></div>
<div class="abs" style="left:876px;top:0;width:1px;height:47.5px;background:#f4f3f6"></div>
<div class="abs" style="left:933px;top:0;width:1px;height:47.5px;background:#f4f3f6"></div>
<div class="abs" style="left:989px;top:0;width:1px;height:47.5px;background:#f4f3f6"></div>
<div class="abs" style="left:1057px;top:0;width:1px;height:47.5px;background:#f4f3f6"></div>
<div class="abs" style="left:1126px;top:0;width:1px;height:47.5px;background:#f4f3f6"></div>
<div class="td" style="left:0.0px;width:36.5px;height:47.5px;line-height:47.5px"><i class="cb" style="left:12px;top:13.8px"></i></div>
<div class="td num" style="left:36.5px;width:35.9px;height:47.5px;line-height:47.5px">229</div>
<div class="td" style="left:72.4px;width:76.0px;height:47.5px;line-height:47.5px"><span class="cj">神卡</span></div>
<div class="td" style="left:148.4px;width:95.1px;height:47.5px;line-height:47.5px"><span class="g cj">参与</span></div>
<div class="td" style="left:243.5px;width:81.9px;height:47.5px;line-height:47.5px"><span class="cj">否</span></div>
<div class="td" style="left:325.4px;width:81.9px;height:47.5px;line-height:47.5px"><span class="cj">藏品</span></div>
<div class="td" style="left:407.3px;width:69.2px;height:47.5px;line-height:47.5px"><span class="cj">链上数藏</span></div>
<div class="td" style="left:476.5px;width:82.0px;height:47.5px;line-height:47.5px"><span class="abs" style="left:25.0px;top:8.2px;width:30px;height:30px"><svg width="30" height="30" viewBox="0 0 30 30"><defs><radialGradient id="g8" cx="0.5" cy="0.45" r="0.6"><stop offset="0" stop-color="#d8dc9a"/><stop offset="1" stop-color="#9a9a62"/></radialGradient></defs><rect width="30" height="30" fill="url(#g8)"/><path d="M6 8 L24 6 L24 19 L6 19Z" fill="#3b3b22"/><ellipse cx="14.5" cy="13" rx="6" ry="3.6" fill="#c8c890"/><circle cx="14.5" cy="13" r="2.2" fill="#22220f"/><rect x="8" y="22" width="14" height="3" fill="#6a6a3a" opacity="0.7"/></svg></span></div>
<div class="td num" style="left:558.5px;width:69.1px;height:47.5px;line-height:47.5px">49.90</div>
<div class="td" style="left:627.6px;width:69.1px;height:47.5px;line-height:47.5px"><span class="cj">单品</span></div>
<div class="td num" style="left:696.7px;width:55.8px;height:47.5px;line-height:47.5px">5</div>
<div class="td num dt" style="left:752.5px;width:124.5px;height:47.5px;line-height:47.5px">2022-05-07 18:50:02</div>
<div class="td num" style="left:877.0px;width:56.0px;height:47.5px;line-height:47.5px">8000</div>
<div class="td num" style="left:933.0px;width:56.2px;height:47.5px;line-height:47.5px">8013</div>
<div class="td num" style="left:989.2px;width:68.4px;height:47.5px;line-height:47.5px">7987</div>
<div class="td" style="left:1057.6px;width:68.9px;height:47.5px;line-height:47.5px"><span class="cj">神</span></div>
<div class="td" style="left:1126.5px;width:68.5px;height:47.5px;line-height:47.5px"><span class="g cj">展示</span></div>
</div>
<div class="abs" style="left:0;top:468.5px;width:1200px;height:1px;background:#f0eff2"></div>
<div class="tr" style="top:469.5px;height:47.0px;background:#fff">
<div class="abs" style="left:0px;top:0;width:1px;height:47.0px;background:#f0f0f0"></div>
<div class="abs" style="left:36px;top:0;width:1px;height:47.0px;background:#f0f0f0"></div>
<div class="abs" style="left:72px;top:0;width:1px;height:47.0px;background:#f0f0f0"></div>
<div class="abs" style="left:148px;top:0;width:1px;height:47.0px;background:#f0f0f0"></div>
<div class="abs" style="left:243px;top:0;width:1px;height:47.0px;background:#f0f0f0"></div>
<div class="abs" style="left:325px;top:0;width:1px;height:47.0px;background:#f0f0f0"></div>
<div class="abs" style="left:407px;top:0;width:1px;height:47.0px;background:#f0f0f0"></div>
<div class="abs" style="left:476px;top:0;width:1px;height:47.0px;background:#f0f0f0"></div>
<div class="abs" style="left:558px;top:0;width:1px;height:47.0px;background:#f0f0f0"></div>
<div class="abs" style="left:627px;top:0;width:1px;height:47.0px;background:#f0f0f0"></div>
<div class="abs" style="left:696px;top:0;width:1px;height:47.0px;background:#f0f0f0"></div>
<div class="abs" style="left:752px;top:0;width:1px;height:47.0px;background:#f0f0f0"></div>
<div class="abs" style="left:876px;top:0;width:1px;height:47.0px;background:#f0f0f0"></div>
<div class="abs" style="left:933px;top:0;width:1px;height:47.0px;background:#f0f0f0"></div>
<div class="abs" style="left:989px;top:0;width:1px;height:47.0px;background:#f0f0f0"></div>
<div class="abs" style="left:1057px;top:0;width:1px;height:47.0px;background:#f0f0f0"></div>
<div class="abs" style="left:1126px;top:0;width:1px;height:47.0px;background:#f0f0f0"></div>
<div class="td" style="left:0.0px;width:36.5px;height:47.0px;line-height:47.0px"><i class="cb" style="left:12px;top:13.5px"></i></div>
<div class="td num" style="left:36.5px;width:35.9px;height:47.0px;line-height:47.0px">227</div>
<div class="td" style="left:72.4px;width:76.0px;height:47.0px;line-height:47.0px"><span class="cj">我是碎片</span></div>
<div class="td" style="left:148.4px;width:95.1px;height:47.0px;line-height:47.0px"><span class="g cj">参与</span></div>
<div class="td" style="left:243.5px;width:81.9px;height:47.0px;line-height:47.0px"><span class="g cj">是</span></div>
<div class="td" style="left:325.4px;width:81.9px;height:47.0px;line-height:47.0px"><span class="cj">藏品</span></div>
<div class="td" style="left:407.3px;width:69.2px;height:47.0px;line-height:47.0px"><span class="cj">二牛数藏</span></div>
<div class="td" style="left:476.5px;width:82.0px;height:47.0px;line-height:47.0px"><span class="abs" style="left:25.0px;top:8.0px;width:30px;height:30px"><svg width="30" height="30" viewBox="0 0 30 30"><defs><radialGradient id="g9" cx="0.45" cy="0.5" r="0.5"><stop offset="0" stop-color="#e84040"/><stop offset="0.7" stop-color="#9a1010"/><stop offset="1" stop-color="#400505"/></radialGradient></defs><rect width="30" height="30" fill="#060303"/><path d="M15 4 C22 6 25 14 22 21 C19 27 11 27 8 21 C5 14 8 6 15 4Z" fill="url(#g9)"/><path d="M17 10 C19 12 19 16 17 18 C15 16 15 12 17 10Z" fill="#5a0808"/></svg></span></div>
<div class="td num" style="left:558.5px;width:69.1px;height:47.0px;line-height:47.0px">20.00</div>
<div class="td" style="left:627.6px;width:69.1px;height:47.0px;line-height:47.0px"><span class="cj">单品</span></div>
<div class="td num" style="left:696.7px;width:55.8px;height:47.0px;line-height:47.0px">5</div>
<div class="td num dt" style="left:752.5px;width:124.5px;height:47.0px;line-height:47.0px">2022-04-25 17:49:00</div>
<div class="td num" style="left:877.0px;width:56.0px;height:47.0px;line-height:47.0px">1000</div>
<div class="td num" style="left:933.0px;width:56.2px;height:47.0px;line-height:47.0px">1</div>
<div class="td num" style="left:989.2px;width:68.4px;height:47.0px;line-height:47.0px">99</div>
<div class="td" style="left:1057.6px;width:68.9px;height:47.0px;line-height:47.0px"></div>
<div class="td" style="left:1126.5px;width:68.5px;height:47.0px;line-height:47.0px"><span class="g cj">展示</span></div>
</div>
<div class="abs" style="left:0;top:515.5px;width:1200px;height:1px;background:#f0f0f0"></div>
<div class="abs" style="left:0;top:508px;width:925px;height:8.5px;background:#8a8a8a;border-radius:4.5px"></div>
</div>
<div class="abs" style="left:260px;top:798px;line-height:30px;font-size:13px;color:#333;white-space:nowrap">显示第</div>
<div class="abs" style="left:302px;top:798px;line-height:30px;font-size:12px;color:#333;white-space:nowrap">1</div>
<div class="abs" style="left:311px;top:798px;line-height:30px;font-size:13px;color:#333;white-space:nowrap">到第</div>
<div class="abs" style="left:339.5px;top:798px;line-height:30px;font-size:12px;color:#333;white-space:nowrap">10</div>
<div class="abs" style="left:355px;top:798px;line-height:30px;font-size:13px;color:#333;white-space:nowrap">条记录，总共</div>
<div class="abs" style="left:436px;top:798px;line-height:30px;font-size:12px;color:#333;white-space:nowrap">12</div>
<div class="abs" style="left:451px;top:798px;line-height:30px;font-size:13px;color:#333;white-space:nowrap">条记录</div>
<div class="abs" style="left:495px;top:798px;line-height:30px;font-size:13px;color:#333;white-space:nowrap">每页显示</div>
<div class="abs" style="left:550px;top:798px;width:48px;height:31px;border:1px solid #ddd;border-radius:3px;background:#f4f4f4;font-size:12px;line-height:29px;padding-left:11px;color:#333">10<i class="abs" style="left:27px;top:12px;border-left:4px solid transparent;border-right:4px solid transparent;border-bottom:4px solid #333"></i></div>
<div class="abs" style="left:600px;top:798px;line-height:30px;font-size:13px;color:#333">条记录</div>
<div class="abs" style="left:1130.5px;top:796px;width:64px;height:31.5px;border:1px solid #ddd;border-radius:3px 0 0 3px;background:#fafafa;text-align:center;line-height:29px;color:#666">上一页</div>
<div class="abs" style="left:1194px;top:796px;width:32.5px;height:31.5px;background:#2c3e50;color:#fff;text-align:center;line-height:31px;font-size:12px">1</div>
<div class="abs" style="left:1226.5px;top:796px;width:31.5px;height:31.5px;border:1px solid #ddd;border-left:0;background:#fafafa;text-align:center;line-height:29px;font-size:12px;color:#555">2</div>
<div class="abs" style="left:1257.5px;top:796px;width:64.5px;height:31.5px;border:1px solid #ddd;border-left:0;border-radius:0 3px 3px 0;background:#fafafa;text-align:center;line-height:29px;color:#666">下一页</div>
<div class="abs" style="left:1327px;top:796px;width:50px;height:31px;border:1px solid #d9d9d9;background:#fff"></div>
<div class="abs" style="left:1382px;top:797px;width:50px;height:30.5px;border:1px solid #ddd;border-radius:3px;background:#f4f4f4;text-align:center;line-height:28.5px;color:#333">跳转</div>
</body></html>
